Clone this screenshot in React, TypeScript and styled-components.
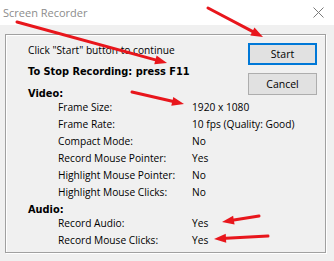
import React from 'react';
import styled, { createGlobalStyle } from 'styled-components';

const GlobalStyle = createGlobalStyle`
  html, body {
    margin: 0;
    padding: 0;
  }
  body {
    width: 334px;
    height: 261px;
    overflow: hidden;
    background: #f0f0f0;
    font-family: "Open Sans", "Liberation Sans", sans-serif;
  }
`;

const Window = styled.div`
  position: relative;
  width: 334px;
  height: 261px;
  background: #f0f0f0;
  color: #000;
`;

const TitleBar = styled.div`
  height: 25px;
  background: #fff;
  display: flex;
  align-items: center;
  justify-content: space-between;
  padding: 0 10px 0 3px;
  box-sizing: border-box;
`;

const TitleText = styled.span`
  font-size: 11px;
  color: #8c8c8c;
`;

const Panel = styled.div`
  margin: 9px 0 0 5px;
  width: 321px;
  height: 219px;
  box-sizing: border-box;
  border: 1px solid #a0a0a0;
  box-shadow: 1px 1px 0 #fff, inset 1px 1px 0 #fff;
  display: flex;
  justify-content: space-between;
  padding: 7px 8px 0 22px;
`;

const Info = styled.div`
  flex: 1;
  min-width: 0;
  display: flex;
  flex-direction: column;
  font-size: 10.2px;
`;

const Line = styled.div<{ $bold?: boolean; $top?: number }>`
  height: 17px;
  line-height: 17px;
  white-space: nowrap;
  margin-top: ${(p) => p.$top || 0}px;
  ${(p) =>
    p.$bold &&
    `
    font-family: "DejaVu Sans", "Liberation Sans", sans-serif;
    font-weight: 700;
    font-size: 9.8px;
  `}
`;

const Header = styled(Line)`
  margin-bottom: -3px;
`;

const Row = styled.div`
  display: grid;
  grid-template-columns: 134px auto;
  height: 17px;
  line-height: 17px;
  padding-left: 30px;
  white-space: nowrap;
`;

const Buttons = styled.div`
  flex-shrink: 0;
  display: flex;
  flex-direction: column;
  gap: 8px;
  padding-top: 1px;
`;

const Button = styled.button<{ $primary?: boolean }>`
  width: 69px;
  height: 22px;
  box-sizing: border-box;
  background: #e1e1e1;
  border: ${(p) => (p.$primary ? '2px solid #0078d7' : '1px solid #adadad')};
  font-family: "Open Sans", "Liberation Sans", sans-serif;
  font-size: 10.5px;
  color: #000;
  padding: 0;
`;

const Overlay = styled.svg`
  position: absolute;
  left: 0;
  top: 0;
  pointer-events: none;
`;

const videoRows = [
  ['Frame Size:', '1920 x 1080'],
  ['Frame Rate:', '10 fps (Quality: Good)'],
  ['Compact Mode:', 'No'],
  ['Record Mouse Pointer:', 'Yes'],
  ['Highlight Mouse Pointer:', 'No'],
  ['Highlight Mouse Clicks:', 'No'],
];

const audioRows = [
  ['Record Audio:', 'Yes'],
  ['Record Mouse Clicks:', 'Yes'],
];

// red annotation arrows: [fromX, fromY, tipX, tipY]
const arrows = [
  [17, 22, 167, 63],
  [208, 8, 263, 37],
  [132, 92, 184, 104],
  [259, 216, 222, 222],
  [268, 236, 214, 239],
];

const Arrow = ({ x1, y1, x2, y2 }: { x1: number; y1: number; x2: number; y2: number }) => {
  const a = Math.atan2(y2 - y1, x2 - x1);
  const len = 12;
  const w = 4.5;
  const bx = x2 - Math.cos(a) * len;
  const by = y2 - Math.sin(a) * len;
  const px = -Math.sin(a) * w;
  const py = Math.cos(a) * w;
  return (
    <g>
      <line x1={x1} y1={y1} x2={bx} y2={by} stroke="#e8161c" strokeWidth={3} strokeLinecap="round" />
      <polygon points={`${x2},${y2} ${bx + px},${by + py} ${bx - px},${by - py}`} fill="#e8161c" />
    </g>
  );
};

const App = () => {
  return (
    <Window>
      <GlobalStyle />
      <TitleBar>
        <TitleText>Screen Recorder</TitleText>
        <svg width="11" height="11" viewBox="0 0 11 11">
          <path d="M0.5 0.5 L10.5 10.5 M10.5 0.5 L0.5 10.5" stroke="#7a7a7a" strokeWidth="1" />
        </svg>
      </TitleBar>
      <Panel>
        <Info>
          <Line>Click "Start" button to continue</Line>
          <Line $bold $top={4}>To Stop Recording: press F11</Line>
          <Header $bold $top={5}>Video:</Header>
          {videoRows.map(([label, value]) => (
            <Row key={label}>
              <span>{label}</span>
              <span>{value}</span>
            </Row>
          ))}
          <Header $bold>Audio:</Header>
          {audioRows.map(([label, value]) => (
            <Row key={label}>
              <span>{label}</span>
              <span>{value}</span>
            </Row>
          ))}
        </Info>
        <Buttons>
          <Button $primary>Start</Button>
          <Button>Cancel</Button>
        </Buttons>
      </Panel>
      <Overlay width="334" height="261">
        {arrows.map(([x1, y1, x2, y2], i) => (
          <Arrow key={i} x1={x1} y1={y1} x2={x2} y2={y2} />
        ))}
      </Overlay>
    </Window>
  );
};

export default App;
